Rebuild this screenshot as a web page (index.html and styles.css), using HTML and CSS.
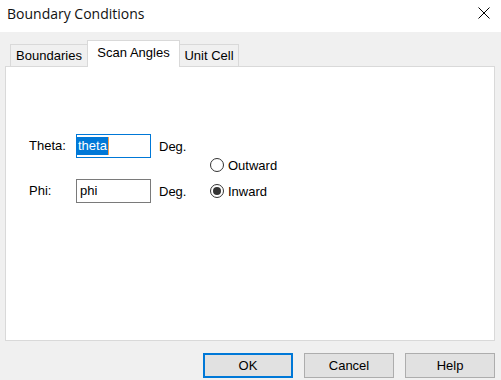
FILE: index.html
```html
<!DOCTYPE html>
<html>
<head>
<meta charset="utf-8">
<link rel="stylesheet" href="styles.css">
</head>
<body>
<div class="window">
  <div class="titlebar">
    <span class="title">Boundary Conditions</span>
    <svg class="close" width="12" height="12" viewBox="0 0 12 12"><path d="M0.5 0.5L11.5 11.5M11.5 0.5L0.5 11.5" stroke="#000" stroke-width="1"/></svg>
  </div>
  <div class="client">
    <div class="tabs">
      <div class="tab tab-b">Boundaries</div>
      <div class="tab tab-s active">Scan Angles</div>
      <div class="tab tab-u">Unit Cell</div>
    </div>
    <div class="panel">
      <div class="form">
        <div class="fields">
          <label class="lbl">Theta:</label>
          <div class="input focused"><span class="sel">theta</span><span class="caret"></span></div>
          <span class="unit">Deg.</span>
          <label class="lbl">Phi:</label>
          <div class="input">phi</div>
          <span class="unit">Deg.</span>
        </div>
        <div class="radios">
          <div class="radio"><span class="dot"></span><span class="rtext">Outward</span></div>
          <div class="radio"><span class="dot checked"></span><span class="rtext">Inward</span></div>
        </div>
      </div>
    </div>
    <div class="buttons">
      <div class="btn default">OK</div>
      <div class="btn">Cancel</div>
      <div class="btn">Help</div>
    </div>
  </div>
</div>
</body>
</html>
```
FILE: styles.css
```css
html, body { margin: 0; padding: 0; }
body { width: 501px; height: 380px; overflow: hidden; background: #f0f0f0; font-family: "Liberation Sans", Arial, sans-serif; font-size: 13px; color: #000; }
.window { width: 501px; height: 380px; display: flex; flex-direction: column; }
.titlebar { height: 32px; background: #fff; display: flex; align-items: center; justify-content: space-between; padding: 0 11px 0 7px; box-sizing: border-box; }
.title { font-family: "Open Sans", "Noto Sans", sans-serif; font-size: 14px; position: relative; top: -3px; color: #111; }
.close { position: relative; top: -3px; }
.client { flex: 1; background: #f0f0f0; padding: 8px 6px 0 5px; display: flex; flex-direction: column; }
.tabs { display: flex; align-items: flex-end; padding-left: 5px; height: 26px; position: relative; z-index: 1; }
.tab { height: 22px; box-sizing: border-box; border: 1px solid #d9d9d9; border-bottom: none; background: #f0f0f0; line-height: 22px; text-align: center; }
.tab-b { width: 77px; border-right: none; }
.tab-s { width: 93px; }
.tab-u { width: 59px; border-left: none; }
.tab.active { height: 27px; background: #fff; margin-bottom: -1px; line-height: 24px; }
.panel { height: 275px; box-sizing: border-box; border: 1px solid #d9d9d9; background: #fff; }
.form { display: flex; padding: 67px 0 0 23px; }
.fields { display: grid; grid-template-columns: 47px 75px 59px; grid-template-rows: 24px 24px; row-gap: 21px; align-items: center; }
.lbl { line-height: 24px; }
.unit { padding-left: 8px; }
.input { height: 24px; box-sizing: border-box; border: 1px solid #7a7a7a; padding: 0 0 0 3px; line-height: 22px; display: flex; align-items: center; }
.input.focused { border-color: #0078d7; padding-left: 0; }
.sel { background: #0078d7; color: #fff; line-height: 18px; padding: 0 1px; }
.caret { width: 1px; height: 18px; background: #f7a04a; }
.radios { margin-top: 18px; display: flex; flex-direction: column; }
.radio { height: 26px; display: flex; align-items: center; gap: 4px; }
.dot { width: 14px; height: 14px; box-sizing: border-box; border: 1px solid #333; border-radius: 50%; background: #fff; display: flex; align-items: center; justify-content: center; }
.dot.checked::after { content: ""; width: 8px; height: 8px; border-radius: 50%; background: #333; }
.buttons { display: flex; justify-content: flex-end; gap: 11px; margin-top: 12px; padding-right: 0; }
.btn { width: 90px; height: 25px; box-sizing: border-box; border: 1px solid #adadad; background: #e1e1e1; display: flex; align-items: center; justify-content: center; }
.btn.default { border: 2px solid #0078d7; }
```
